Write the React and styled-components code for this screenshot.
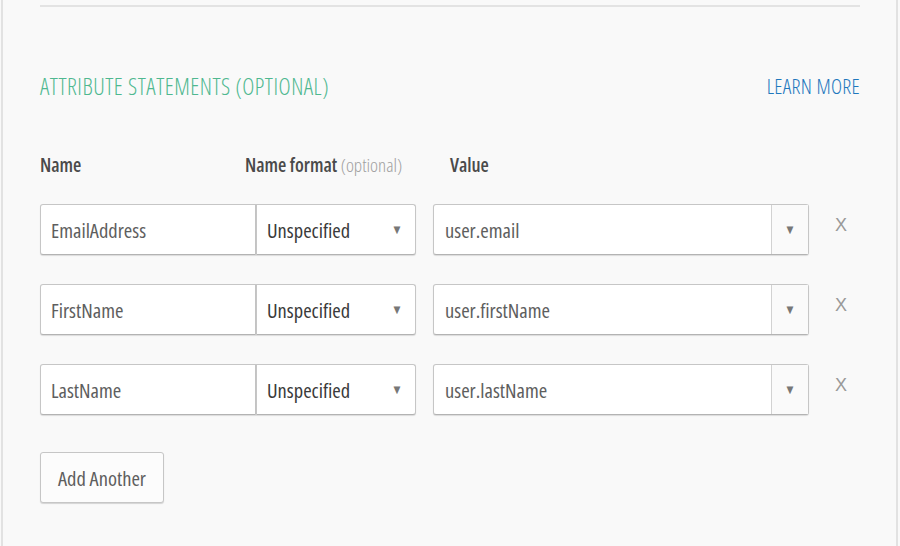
import React from "react";
import styled, { createGlobalStyle } from "styled-components";

const font = `"Open Sans", Roboto, "Liberation Sans", sans-serif`;

const GlobalStyle = createGlobalStyle`
  html, body {
    margin: 0;
    padding: 0;
    background: #f9f9f9;
  }
  body {
    font-family: ${font};
    font-stretch: 75%;
  }
  button {
    font-stretch: 75%;
  }
`;

const Panel = styled.div`
  width: 897px;
  height: 546px;
  margin-left: 1px;
  border-left: 2px solid #e2e2e2;
  border-right: 2px solid #e2e2e2;
  background: #f9f9f9;
  box-sizing: border-box;
  padding: 5px 36px 0 37px;
  overflow: hidden;
`;

const Divider = styled.div`
  height: 2px;
  background: #e3e3e3;
`;

const Header = styled.div`
  display: flex;
  justify-content: space-between;
  align-items: center;
  margin-top: 67px;
  height: 24px;
`;

const Title = styled.h2`
  margin: 0;
  font-size: 23px;
  font-weight: 300;
  letter-spacing: 0.5px;
  color: #4fb890;
  white-space: nowrap;
`;

const LearnMore = styled.a`
  font-size: 21px;
  font-weight: 300;
  letter-spacing: 0.3px;
  color: #1f78bd;
  text-decoration: none;
`;

const Grid = styled.div`
  display: grid;
  grid-template-columns: 216px 160px 17px 376px 52px;
  margin-top: 55px;
  row-gap: 29px;
`;

const Label = styled.div`
  font-size: 19px;
  font-weight: 600;
  color: #4a4a4a;
  height: 24px;
  line-height: 24px;
  white-space: nowrap;
  margin-left: ${(p) => p.$indent || 0}px;
  margin-bottom: -2px;
  grid-column: ${(p) => p.$col};
`;

const Optional = styled.span`
  font-weight: 300;
  color: #a0a0a0;
`;

const Field = styled.div`
  height: 51px;
  box-sizing: border-box;
  background: #fff;
  border: 1px solid #c6c6c6;
  border-bottom-color: #b3b3b3;
  box-shadow: 0 1px 1px rgba(0, 0, 0, 0.12);
  display: flex;
  align-items: center;
  font-size: 20.5px;
  border-radius: ${(p) => p.$radius};
`;

const FieldText = styled.span`
  flex: 1;
  white-space: nowrap;
  padding-left: ${(p) => p.$pad || 10}px;
  font-weight: 400;
  color: ${(p) => (p.$dark ? "#3a3a3a" : "#5e5e5e")};
`;

const Caret = styled.span`
  width: 36px;
  align-self: stretch;
  display: flex;
  align-items: center;
  justify-content: center;
  font-family: "DejaVu Sans", sans-serif;
  font-size: 10px;
  color: #777;
  ${(p) => p.$boxed && "border-left: 1px solid #d2d2d2; background: #fafafa;"}
`;

const Remove = styled.button`
  grid-column: 5;
  align-self: start;
  justify-self: start;
  margin: 11px 0 0 26px;
  padding: 0;
  border: none;
  background: none;
  font-family: "Liberation Sans", sans-serif;
  font-size: 18px;
  color: #999;
  cursor: pointer;
`;

const AddButton = styled.button`
  margin-top: 37px;
  width: 124px;
  height: 51px;
  padding: 0;
  white-space: nowrap;
  border: 1px solid #c6c6c6;
  border-radius: 3px;
  background: #fcfcfc;
  box-shadow: 0 1px 1px rgba(0, 0, 0, 0.15);
  font-family: ${font};
  font-size: 20.5px;
  font-weight: 400;
  color: #5e5e5e;
`;

const rows = [
  { name: "EmailAddress", value: "user.email" },
  { name: "FirstName", value: "user.firstName" },
  { name: "LastName", value: "user.lastName" },
];

export default function App() {
  return (
    <>
      <GlobalStyle />
      <Panel>
        <Divider />
        <Header>
          <Title>ATTRIBUTE STATEMENTS (OPTIONAL)</Title>
          <LearnMore href="#">LEARN MORE</LearnMore>
        </Header>
        <Grid>
          <Label $col={1}>Name</Label>
          <Label $col={2} $indent={-11}>
            Name format <Optional>(optional)</Optional>
          </Label>
          <Label $col={4} $indent={17}>Value</Label>
          {rows.map((r) => (
            <React.Fragment key={r.name}>
              <Field $radius="3px 0 0 3px" style={{ gridColumn: 1 }}>
                <FieldText>{r.name}</FieldText>
              </Field>
              <Field $radius="0 3px 3px 0" style={{ gridColumn: 2 }}>
                <FieldText $dark>Unspecified</FieldText>
                <Caret>▼</Caret>
              </Field>
              <Field $radius="3px" style={{ gridColumn: 4 }}>
                <FieldText $pad={11}>{r.value}</FieldText>
                <Caret $boxed>▼</Caret>
              </Field>
              <Remove>X</Remove>
            </React.Fragment>
          ))}
        </Grid>
        <AddButton>Add Another</AddButton>
      </Panel>
    </>
  );
}
